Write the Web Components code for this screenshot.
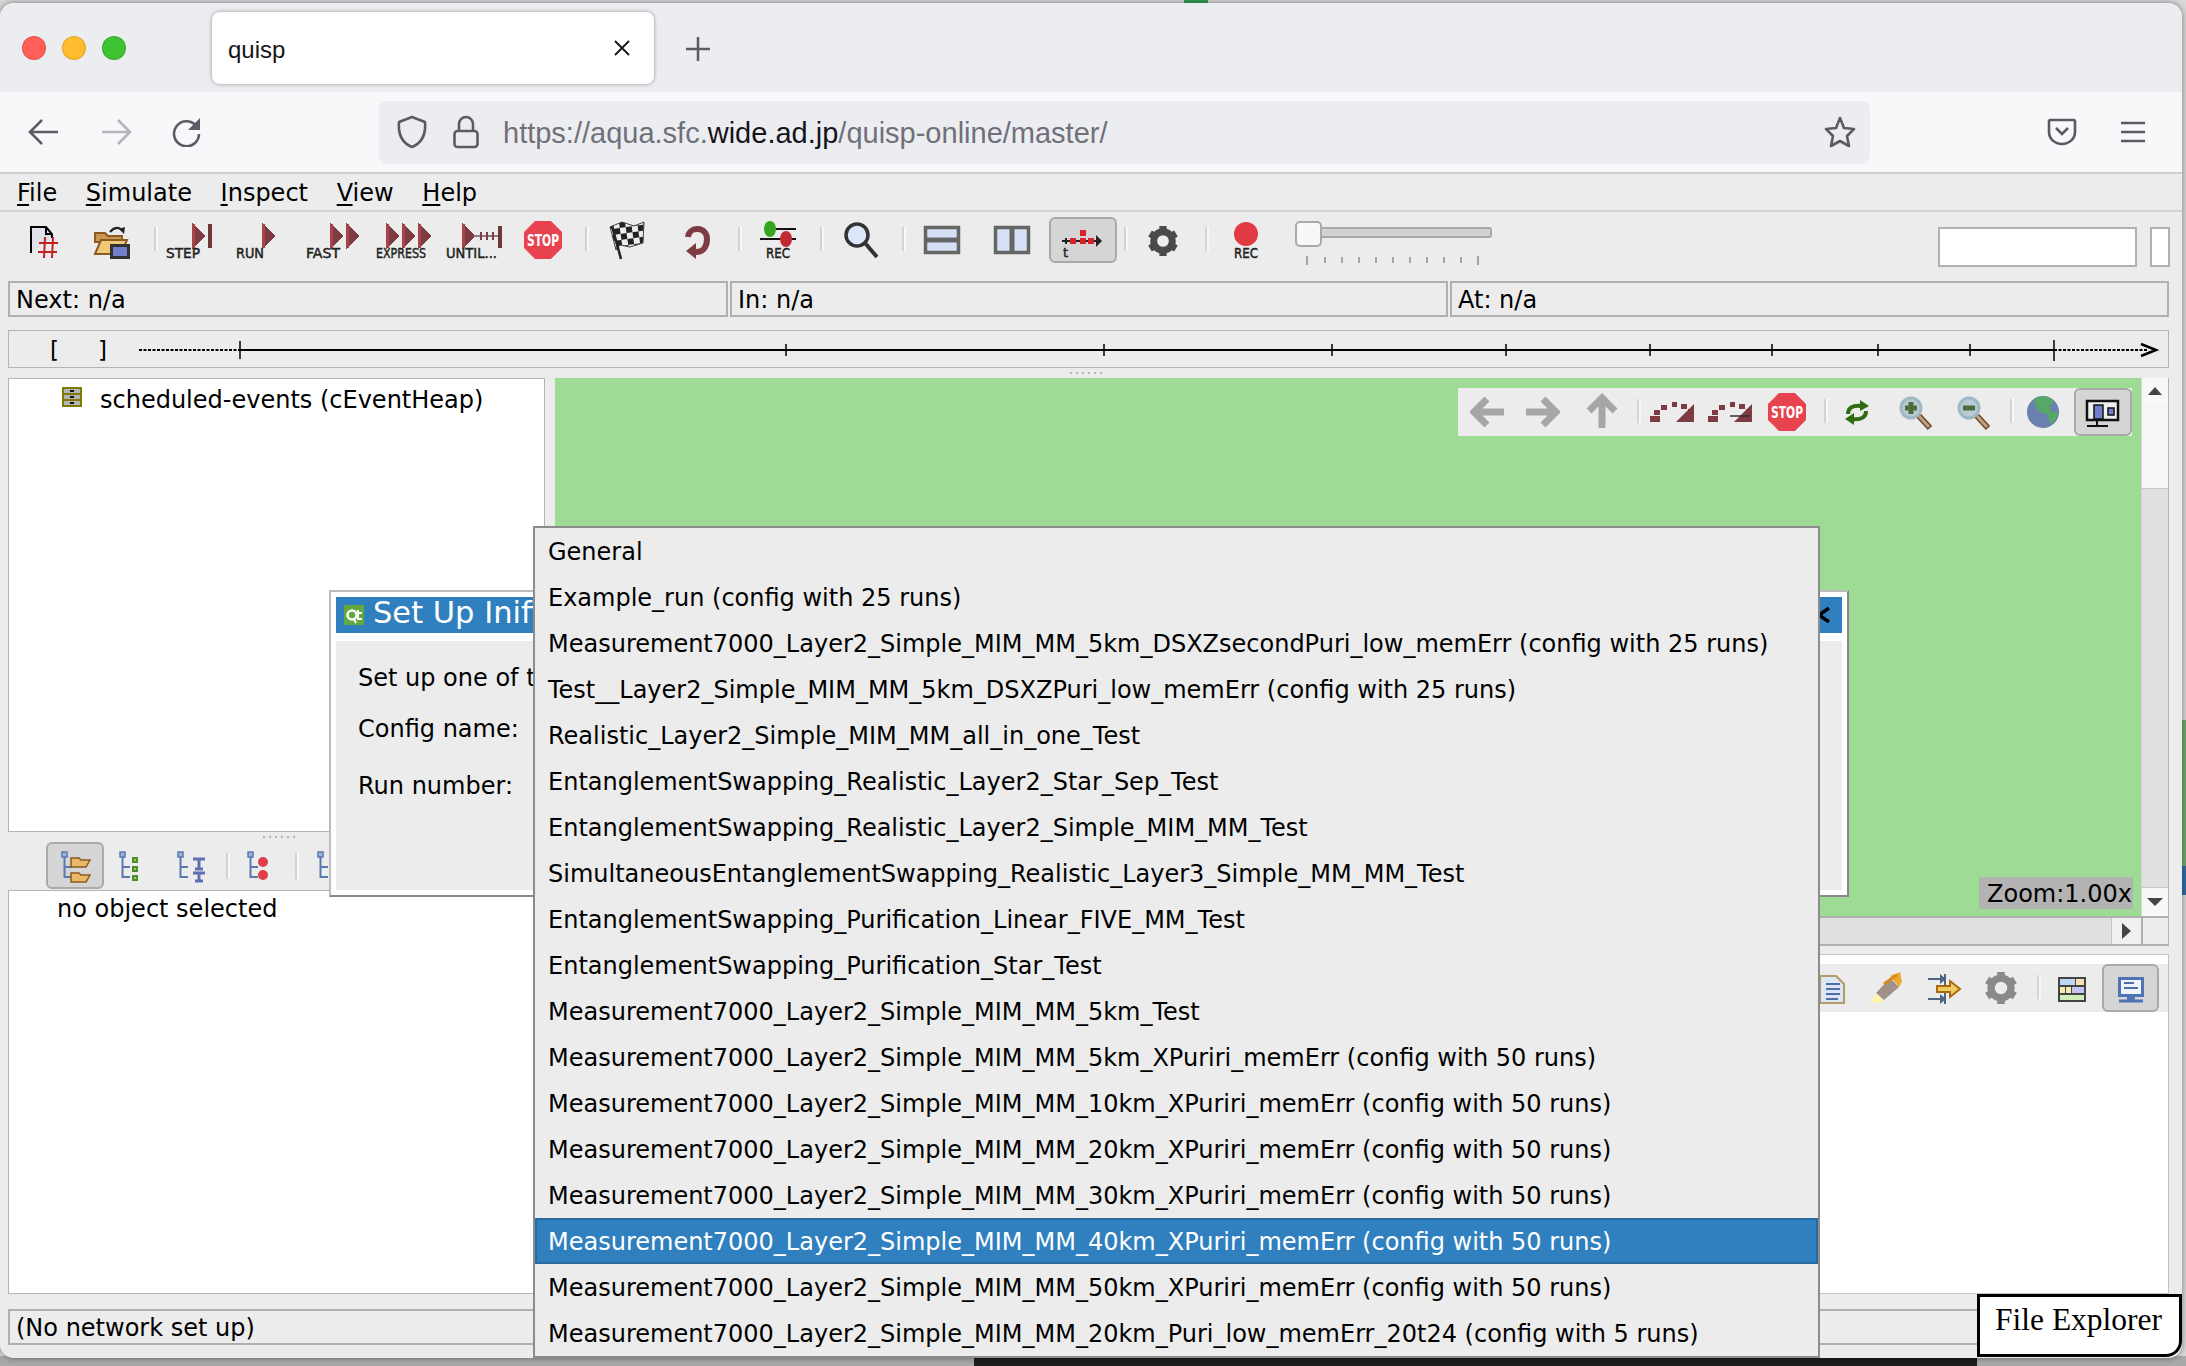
<!DOCTYPE html>
<html>
<head>
<meta charset="utf-8">
<title>quisp</title>
<style>
  html, body { margin: 0; padding: 0; width: 2186px; height: 1366px; overflow: hidden; }
  body {
    position: relative;
    background: linear-gradient(to bottom, #d8d8d8 0 720px, #6fa870 720px 866px, #2f6ea8 866px 895px, #d8d8d8 895px 1356px, #a9a9a9 1356px);
    font-family: "DejaVu Sans", sans-serif;
  }
</style>
</head>
<body>
<desk-behind></desk-behind>
<browser-window>
  <tab-strip></tab-strip>
  <nav-strip></nav-strip>
  <qt-app>
    <menu-bar></menu-bar>
    <tool-strip name="main"></tool-strip>
    <status-row>
      <qt-field style="width:720px">Next: n/a</qt-field>
      <qt-field style="width:718px">In: n/a</qt-field>
      <qt-field style="width:719px">At: n/a</qt-field>
    </status-row>
    <time-line></time-line>
    <split-dots style="height:10px;padding-left:1070px"></split-dots>
    <main-area>
      <left-col>
        <qt-pane style="height:454px">
          <tree-row>scheduled-events (cEventHeap)</tree-row>
        </qt-pane>
        <split-dots style="height:10px;padding-left:255px"></split-dots>
        <tool-strip name="objects"></tool-strip>
        <qt-pane style="flex:1"><pane-note>no object selected</pane-note></qt-pane>
      </left-col>
      <right-col>
        <net-canvas></net-canvas>
        <log-panel><tool-strip name="log"></tool-strip></log-panel>
      </right-col>
    </main-area>
    <status-row style="margin-top:15px">
      <qt-field style="width:2161px">(No network set up)</qt-field>
    </status-row>

    <setup-dialog></setup-dialog>
    <combo-popup>
      <popup-row>General</popup-row>
      <popup-row>Example_run (config with 25 runs)</popup-row>
      <popup-row>Measurement7000_Layer2_Simple_MIM_MM_5km_DSXZsecondPuri_low_memErr (config with 25 runs)</popup-row>
      <popup-row>Test__Layer2_Simple_MIM_MM_5km_DSXZPuri_low_memErr (config with 25 runs)</popup-row>
      <popup-row>Realistic_Layer2_Simple_MIM_MM_all_in_one_Test</popup-row>
      <popup-row>EntanglementSwapping_Realistic_Layer2_Star_Sep_Test</popup-row>
      <popup-row>EntanglementSwapping_Realistic_Layer2_Simple_MIM_MM_Test</popup-row>
      <popup-row>SimultaneousEntanglementSwapping_Realistic_Layer3_Simple_MM_MM_Test</popup-row>
      <popup-row>EntanglementSwapping_Purification_Linear_FIVE_MM_Test</popup-row>
      <popup-row>EntanglementSwapping_Purification_Star_Test</popup-row>
      <popup-row>Measurement7000_Layer2_Simple_MIM_MM_5km_Test</popup-row>
      <popup-row>Measurement7000_Layer2_Simple_MIM_MM_5km_XPuriri_memErr (config with 50 runs)</popup-row>
      <popup-row>Measurement7000_Layer2_Simple_MIM_MM_10km_XPuriri_memErr (config with 50 runs)</popup-row>
      <popup-row>Measurement7000_Layer2_Simple_MIM_MM_20km_XPuriri_memErr (config with 50 runs)</popup-row>
      <popup-row>Measurement7000_Layer2_Simple_MIM_MM_30km_XPuriri_memErr (config with 50 runs)</popup-row>
      <popup-row selected>Measurement7000_Layer2_Simple_MIM_MM_40km_XPuriri_memErr (config with 50 runs)</popup-row>
      <popup-row>Measurement7000_Layer2_Simple_MIM_MM_50km_XPuriri_memErr (config with 50 runs)</popup-row>
      <popup-row>Measurement7000_Layer2_Simple_MIM_MM_20km_Puri_low_memErr_20t24 (config with 5 runs)</popup-row>
    </combo-popup>
  </qt-app>
</browser-window>
<file-tag>File Explorer</file-tag>

<script>
// small helper: element with open shadow root and fixed markup
function simple(tag, html) {
  customElements.define(tag, class extends HTMLElement {
    constructor() {
      super();
      this.attachShadow({ mode: 'open' }).innerHTML = html;
    }
  });
}

// ---- icon helpers, all drawn in page coordinates ----
const MAROON = '#7e3c42';

function tri(x, y0, y1, w) {
  // crisp edges give the stairs of the upscaled original icons
  const mid = (y0 + y1) / 2;
  return `<polygon points="${x},${y0 - 1} ${x + w},${mid} ${x},${y1 + 1}" fill="${MAROON}" shape-rendering="crispEdges"/>
  <rect x="${x}" y="${y0}" width="3" height="${y1 - y0}" fill="#a6434c"/>`;
}
function lbl(x0, x1, t, y = 258) {
  return `<text x="${x0}" y="${y}" textLength="${x1 - x0}" lengthAdjust="spacingAndGlyphs" font-family="DejaVu Sans" font-size="13.5" fill="#222" stroke="#222" stroke-width=".45">${t}</text>`;
}
function sep(x, y0, y1) {
  return [x - 1, x + 3, `<rect x="${x - 1}" y="${y0}" width="2" height="${y1 - y0}" fill="#d3d3d3"/><rect x="${x + 1}" y="${y0}" width="2" height="${y1 - y0}" fill="#f8f8f8"/>`];
}
function stop(cx, cy) {
  const a = 19, b = 8;
  return `<polygon points="${cx - b},${cy - a} ${cx + b},${cy - a} ${cx + a},${cy - b} ${cx + a},${cy + b} ${cx + b},${cy + a} ${cx - b},${cy + a} ${cx - a},${cy + b} ${cx - a},${cy - b}" fill="#e7434f"/>
  <text x="${cx - 16}" y="${cy + 6}" textLength="32" lengthAdjust="spacingAndGlyphs" font-family="DejaVu Sans" font-weight="bold" font-size="15" fill="#fff">STOP</text>`;
}
function gear(cx, cy, r, c) {
  let s = `<circle cx="${cx}" cy="${cy}" r="${r * .62}" fill="none" stroke="${c}" stroke-width="${r * .46}"/>`;
  for (let i = 0; i < 6; i++) {
    s += `<rect x="${cx - r * .24}" y="${cy - r}" width="${r * .48}" height="${r * .5}" fill="${c}" transform="rotate(${i * 60} ${cx} ${cy})"/>`;
  }
  return s;
}
function selBtn(x0, x1, y0, y1) {
  return `<rect x="${x0 + 1}" y="${y0 + 1}" width="${x1 - x0 - 2}" height="${y1 - y0 - 2}" rx="5" fill="#d5d5d5" stroke="#a9a9a9" stroke-width="2"/>`;
}
function treeBase(x, y) {
  // small node with its branches
  const c = '#5a78b0';
  return `<rect x="${x}" y="${y}" width="5" height="5" fill="#9db3d8" stroke="${c}" stroke-width="1.5"/>
  <path d="M${x + 2.5} ${y + 5}V${y + 25}H${x + 10}M${x + 2.5} ${y + 15}H${x + 10}" fill="none" stroke="${c}" stroke-width="2"/>`;
}
function lens(cx, cy, sign) {
  const m = sign === '+' ? `<path d="M${cx - 6} ${cy}h12M${cx} ${cy - 6}v12" stroke="#4d6b3e" stroke-width="5"/>` : `<path d="M${cx - 6} ${cy}h12" stroke="#4d6b3e" stroke-width="5"/>`;
  return `<circle cx="${cx}" cy="${cy}" r="10" fill="#b8ccd4" stroke="#9fb8c4" stroke-width="3"/>${m}
  <path d="M${cx + 8} ${cy + 8}L${cx + 19} ${cy + 20}" stroke="#6b4a30" stroke-width="6"/>
  <path d="M${cx + 8} ${cy + 8}L${cx + 18} ${cy + 19}" stroke="#c0a080" stroke-width="3"/>`;
}
function curved(x, y) {
  return `<g fill="${MAROON}"><rect x="${x}" y="${y + 14}" width="10" height="6"/><rect x="${x + 4}" y="${y + 8}" width="6" height="5"/><rect x="${x + 11}" y="${y + 3}" width="6" height="5"/><rect x="${x + 22}" y="${y}" width="5" height="5"/><rect x="${x + 31}" y="${y + 2}" width="6" height="5"/><rect x="${x + 38}" y="${y + 7}" width="6" height="5"/><polygon points="${x + 44},${y + 2} ${x + 44},${y + 20} ${x + 26},${y + 20}"/></g>`;
}

const STRIPS = {
  main: { x0: 0, y0: 212, h: 69, items: [
    [28, 60, `<path d="M32 252H31V227H46L52 234V238M46 227V234H52" fill="#dfe2e8" stroke="#000" stroke-width="2"/>
      <path d="M45 237L44 258M53 237L52 258M39 243H58M38 252H57" stroke="#bf2020" stroke-width="2" fill="none"/>`],
    [92, 132, `<path d="M95 233h10l3 3h14v6H95z" fill="#c9974e" stroke="#8a5a20" stroke-width="2"/><path d="M95 254l6-14h26l-6 14z" fill="#f0c878" stroke="#8a5a20" stroke-width="2"/>
      <rect x="111.500" y="245.500" width="17" height="12" fill="#6f7fcc" stroke="#333" stroke-width="3"/>
      <path d="M110 232q6-7 12-2" fill="none" stroke="#222" stroke-width="2"/><path d="M119 229l6-2-1 7z" fill="#222"/>`],
    sep(155, 227, 251),
    [166, 213, tri(192, 224, 248, 14) + `<rect x="208" y="224" width="4" height="24" fill="#6f383c"/>` + lbl(166, 200, 'STEP')],
    [236, 277, tri(262, 224, 248, 14) + lbl(236, 264, 'RUN')],
    [306, 361, tri(330, 224, 248, 14) + tri(346, 224, 248, 14) + lbl(306, 340, 'FAST')],
    [376, 433, tri(386, 224, 248, 14) + tri(402, 224, 248, 14) + tri(418, 224, 248, 14) + lbl(376, 426, 'EXPRESS')],
    [446, 503, tri(462, 224, 248, 14) + `<rect x="474" y="235" width="26" height="2" fill="#8c7a7c"/><path d="M481 232v8M487 232v8M493 232v8" stroke="${MAROON}" stroke-width="2"/><rect x="498" y="226" width="4" height="22" fill="#6f383c"/>` + lbl(446, 497, 'UNTIL...')],
    [524, 563, stop(543, 240)],
    sep(586, 227, 251),
    [607, 646, `<defs><pattern id="chk" width="12" height="12" patternUnits="userSpaceOnUse" patternTransform="rotate(-8)"><rect width="12" height="12" fill="#eee"/><rect width="6" height="6" fill="#222"/><rect x="6" y="6" width="6" height="6" fill="#222"/></pattern></defs>
      <polygon points="610,227 622,222 634,226 644,222 643,243 630,247 620,245 616,250" fill="url(#chk)" stroke="#444" stroke-width="1"/>
      <path d="M612 226L621 259" stroke="#222" stroke-width="2.500"/>`],
    [682, 712, `<path d="M688 237C689 226 707 226 707 239C707 249 701 252 696 252" fill="none" stroke="${MAROON}" stroke-width="6"/><polygon points="696,243 696,259 686,251" fill="${MAROON}"/>`],
    sep(739, 227, 251),
    [758, 798, `<path d="M768 229H796M760 239H796" stroke="#111" stroke-width="2"/><ellipse cx="770" cy="229" rx="6" ry="8" fill="#35a51e"/><ellipse cx="786" cy="239" rx="6" ry="8" fill="#c02a30"/>` + lbl(766, 790, 'REC')],
    sep(821, 227, 251),
    [842, 880, `<circle cx="857" cy="235" r="11" fill="#dbe6f8" stroke="#333" stroke-width="3.5"/><path d="M865 243L877 257" stroke="#333" stroke-width="4"/>`],
    sep(903, 227, 251),
    [922, 962, `<rect x="925.500" y="227.500" width="33" height="25" fill="#d6e0f4" stroke="#666" stroke-width="3.500"/><path d="M925 240H959" stroke="#666" stroke-width="5"/>`],
    [992, 1032, `<rect x="995.500" y="227.500" width="33" height="25" fill="#d6e0f4" stroke="#666" stroke-width="3.500"/><path d="M1012 227V253" stroke="#666" stroke-width="5"/>`],
    [1049, 1117, selBtn(1049, 1117, 217, 263) + `<path d="M1062 241H1098" stroke="#222" stroke-width="2"/><polygon points="1096,235 1102,241 1096,247" fill="#222"/>
      <path d="M1066 238v6" stroke="#222" stroke-width="2"/><g fill="#d8232d"><rect x="1070" y="238" width="6" height="6"/><rect x="1080" y="238" width="6" height="6"/><rect x="1088" y="238" width="6" height="6"/><rect x="1080" y="230" width="6" height="6"/></g>
      <text x="1063" y="257" font-family="DejaVu Sans" font-size="13" fill="#222" stroke="#222" stroke-width=".4">t</text>`],
    sep(1125, 227, 251),
    [1146, 1180, gear(1163, 241, 15, '#4a4a4a')],
    sep(1206, 227, 251),
    [1232, 1260, `<circle cx="1246" cy="234" r="12" fill="#e13a42"/>` + lbl(1234, 1258, 'REC')],
    [1293, 1494, `<rect x="1310" y="228" width="181" height="9" rx="2" fill="#d2d2d2" stroke="#a9a9a9" stroke-width="2"/>
      <rect x="1296" y="222" width="25" height="24" rx="4" fill="#f8f8f8" stroke="#a9a9a9" stroke-width="2"/>
      <path d="M1307 256v9M1478 256v9M1325 257v6M1342 257v6M1359 257v6M1376 257v6M1393 257v6M1410 257v6M1427 257v6M1444 257v6M1461 257v6" stroke="#a5a5a5" stroke-width="2"/>`],
    { x0: 1938, x1: 2137, box: [227, 267] },
    { x0: 2150, x1: 2170, box: [227, 267] }
  ] },
  objects: { x0: 8, y0: 842, h: 48, items: [
    [46, 104, selBtn(46, 104, 842, 889) + treeBase(62, 852) + `<g fill="#eab868" stroke="#8a5a20" stroke-width="1.500"><path d="M71 858h8l2 2h9l-4 7H71z"/><path d="M71 873h8l2 2h9l-4 7H71z"/></g>`],
    [118, 140, treeBase(120, 852) + `<g fill="#9ccc60" stroke="#4d8c2a" stroke-width="2"><rect x="133" y="858" width="4" height="4"/><rect x="133" y="867" width="4" height="4"/><rect x="133" y="876" width="4" height="4"/></g>`],
    [176, 206, treeBase(178, 852) + `<g fill="none" stroke="#5f6fb4" stroke-width="3"><path d="M193 859h12M199 859v10M195 869h8M193 873h12M199 873v9M195 881h8"/></g>`],
    sep(227, 853, 879),
    [246, 270, treeBase(248, 852) + `<circle cx="263" cy="862" r="5" fill="#e23e49"/><circle cx="263" cy="875" r="5" fill="#e23e49"/>`],
    sep(296, 853, 879),
    [316, 329, treeBase(318, 852)]
  ] },
  canvas: { x0: 1458, y0: 388, h: 48, items: [
    [1470, 1506, `<path d="M1504 412H1476M1487 399L1474 412L1487 425" fill="none" stroke="#a6a6a6" stroke-width="7"/>`],
    [1524, 1560, `<path d="M1526 412H1554M1543 399L1556 412L1543 425" fill="none" stroke="#a6a6a6" stroke-width="7"/>`],
    [1584, 1620, `<path d="M1602 428V400M1589 411L1602 398L1615 411" fill="none" stroke="#a6a6a6" stroke-width="7"/>`],
    sep(1638, 399, 423),
    [1648, 1696, curved(1650, 402)],
    [1706, 1754, curved(1708, 402) + `<path d="M1730 416H1750" stroke="#3a2a2a" stroke-width="1.500"/>`],
    [1767, 1807, stop(1787, 412)],
    sep(1825, 399, 423),
    [1844, 1870, `<g fill="none" stroke="#2f6b10" stroke-width="4"><path d="M1848 414C1848 408 1852 405 1862 406"/><path d="M1866 411C1866 417 1862 420 1852 419"/></g><g fill="#2f6b10"><polygon points="1860,400 1869,406 1860,411"/><polygon points="1854,413 1845,419 1854,425"/></g>`],
    [1899, 1933, lens(1911, 408, '+')],
    [1957, 1991, lens(1969, 408, '-')],
    sep(2011, 399, 423),
    [2025, 2061, `<circle cx="2043" cy="412" r="16" fill="#6a80ae"/><path d="M2034 399q10-6 18 0q4 5-3 7l3 6l6 0q-1 8-7 12q-3-5-4-10q-9-1-11-8z" fill="#55a866"/>`],
    [2074, 2132, selBtn(2074, 2132, 388, 436) + `<rect x="2087" y="401" width="31" height="19" fill="#eee" stroke="#111" stroke-width="2.500"/><rect x="2094" y="405" width="9" height="14" fill="#6f7fcc" stroke="#111" stroke-width="1.500"/><rect x="2108" y="408" width="6" height="7" fill="#6f7fcc" stroke="#111" stroke-width="1.500"/><path d="M2097 420V426M2087 426H2108" stroke="#111" stroke-width="2"/>`]
  ] },
  log: { x0: 556, y0: 964, h: 48, items: [
    [1818, 1846, `<path d="M1820 976H1836L1844 984V1003H1820Z" fill="#dce7f6" stroke="#b59a66" stroke-width="2"/><path d="M1826 984H1840M1826 989H1840M1826 994H1840M1826 999H1838" stroke="#4f6ea8" stroke-width="2"/>`],
    [1868, 1904, `<path d="M1890 978L1899 987L1884 1000L1876 993Z" fill="#a09088"/><path d="M1890 976L1900 972L1902 982L1899 987Z" fill="#f0a830"/><path d="M1876 993L1885 1002L1870 1003Z" fill="#fff4b0"/><path d="M1884 984L1897 975" stroke="#d88a20" stroke-width="3"/>`],
    [1926, 1962, `<path d="M1928 979H1942M1928 999H1942M1945 974V986M1945 993V1004" stroke="#4f6480" stroke-width="2"/><polygon points="1940,974 1946,979 1940,984" fill="#4f6480"/><polygon points="1940,994 1946,999 1940,1004" fill="#4f6480"/>
      <path d="M1937 986H1950V981L1960 989L1950 997V992H1937Z" fill="#f0cc60" stroke="#a86a10" stroke-width="2"/>`],
    [1984, 2018, gear(2001, 988, 16, '#8a8a8a')],
    sep(2038, 975, 999),
    [2056, 2088, `<rect x="2058" y="977" width="28" height="25" fill="#444"/><rect x="2060" y="979" width="15" height="6" fill="#bcd6f4"/><rect x="2076" y="979" width="8" height="6" fill="#fbe0b0"/><rect x="2060" y="987" width="5" height="6" fill="#f4ecb0"/><rect x="2066" y="987" width="5" height="6" fill="#f4ecb0"/><rect x="2072" y="987" width="12" height="6" fill="#c4c4f4"/><rect x="2060" y="995" width="24" height="5" fill="#cfeeb8"/>`],
    [2102, 2159, selBtn(2102, 2159, 964, 1012) + `<rect x="2119.500" y="978.500" width="23" height="17" fill="#eef3fa" stroke="#4f74b4" stroke-width="3"/><path d="M2124 983H2134M2124 988H2138" stroke="#4f6ea8" stroke-width="2"/><path d="M2127 998H2135M2119 1001H2143" stroke="#4f74b4" stroke-width="3"/>`]
  ] }
};

class ToolStrip extends HTMLElement {
  constructor() {
    super();
    this.attachShadow({ mode: 'open' });
  }
  connectedCallback() {
    const s = STRIPS[this.getAttribute('name')];
    let prev = s.x0, out = '';
    for (const it of s.items) {
      const box = !Array.isArray(it);
      const x0 = box ? it.x0 : it[0], x1 = box ? it.x1 : it[1];
      const left = x0 - prev;
      if (box) {
        out += `<div class="box" style="margin-left:${left}px;margin-top:${it.box[0] - s.y0}px;width:${x1 - x0}px;height:${it.box[1] - it.box[0]}px"></div>`;
      } else {
        out += `<svg style="margin-left:${left}px" width="${x1 - x0}" height="${s.h}" viewBox="${x0} ${s.y0} ${x1 - x0} ${s.h}">${it[2]}</svg>`;
      }
      prev = x1;
    }
    this.shadowRoot.innerHTML = `<style>
      :host { display: flex; height: ${s.h}px; align-items: flex-start; flex: none; }
      svg { display: block; flex: none; }
      .box { flex: none; box-sizing: border-box; background: #fff; border: 2px solid #b0b0b0; }
    </style>${out}`;
  }
}
customElements.define('tool-strip', ToolStrip);

simple('desk-behind', `<style>
  :host { display: block; position: absolute; inset: 0; }
  .dark { position: absolute; left: 974px; width: 1003px; top: 1358px; height: 8px; background: #1e1e1e; }
  .tip { position: absolute; left: 1184px; top: 0; width: 24px; height: 3px; background: #35a05a; }
</style><div class="dark"></div><div class="tip"></div>`);

simple('browser-window', `<style>
  :host {
    display: flex; flex-direction: column; position: relative;
    width: 2182px; height: 1355px; margin-top: 3px;
    border-radius: 14px 14px 14px 14px; overflow: hidden;
    box-shadow: 0 0 6px rgba(0,0,0,.45);
  }
</style><slot></slot>`);

simple('tab-strip', `<style>
  :host { display: flex; align-items: flex-start; height: 89px; flex: none; background: #ecedf1; }
  .lights { display: flex; gap: 16px; padding: 33px 0 0 22px; flex: none; width: 190px; }
  .lights i { display: block; width: 24px; height: 24px; border-radius: 50%; box-sizing: border-box; border: 1px solid rgba(0,0,0,.12); }
  .tab {
    margin: 9px 0 0 0; width: 442px; height: 72px; box-sizing: border-box; flex: none;
    background: #fff; border-radius: 8px; box-shadow: 0 0 4px rgba(0,0,0,.35);
    display: flex; align-items: center; padding: 0 24px 0 16px;
    font: 24px "Liberation Sans", sans-serif; color: #15141a;
  }
  .tab span { flex: 1; padding-top: 4px; }
  .plus { margin: 33px 0 0 31px; flex: none; }
</style>
<div class="lights"><i style="background:#ff5f57"></i><i style="background:#febc2e"></i><i style="background:#3fc332"></i></div>
<div class="tab"><span>quisp</span>
  <svg width="16" height="16" viewBox="0 0 16 16"><path d="M1 1L15 15M15 1L1 15" stroke="#15141a" stroke-width="1.800"/></svg></div>
<svg class="plus" width="26" height="26" viewBox="0 0 26 26"><path d="M13 1V25M1 13H25" stroke="#5b5b66" stroke-width="2.500"/></svg>`);

simple('nav-strip', `<style>
  :host { display: flex; align-items: center; height: 82px; flex: none; box-sizing: border-box; background: #f8f8fa; border-bottom: 2px solid #cfcfcf; }
  svg { display: block; flex: none; }
  .url {
    margin-left: 177px; width: 1491px; height: 63px; flex: none; box-sizing: border-box;
    background: #ecedf1; border-radius: 8px; display: flex; align-items: center; padding: 0 14px 0 18px;
  }
  .txt { margin-left: 24px; padding-top: 2px; font: 29px "Liberation Sans", sans-serif; color: #70707a; flex: 1; white-space: nowrap; }
  .txt b { font-weight: normal; color: #15141a; }
</style>
<svg style="margin-left:28px" width="32" height="28" viewBox="0 0 32 28"><path d="M2 14H30M14 2L2 14L14 26" fill="none" stroke="#5b5b66" stroke-width="2.600"/></svg>
<svg style="margin-left:40px" width="32" height="28" viewBox="0 0 32 28"><path d="M2 14H30M18 2L30 14L18 26" fill="none" stroke="#b4b4bb" stroke-width="2.600"/></svg>
<svg style="margin-left:40px" width="30" height="30" viewBox="0 0 30 30"><path d="M25 10A12.500 12.500 0 1 0 27 17" fill="none" stroke="#5b5b66" stroke-width="2.600"/><polygon points="28,1 28,13 16,13" fill="#5b5b66"/></svg>
<div class="url">
  <svg width="30" height="34" viewBox="0 0 30 34"><path d="M15 2L28 7C29 19 25 28 15 32C5 28 1 19 2 7Z" fill="none" stroke="#5b5b66" stroke-width="2.600" stroke-linejoin="round"/></svg>
  <svg style="margin-left:26px" width="26" height="34" viewBox="0 0 26 34"><path d="M6 16V9A7 7 0 0 1 20 9V16" fill="none" stroke="#5b5b66" stroke-width="2.600"/><rect x="1.500" y="16" width="23" height="16" rx="3" fill="none" stroke="#5b5b66" stroke-width="2.600"/></svg>
  <div class="txt">https://aqua.sfc.<b>wide.ad.jp</b>/quisp-online/master/</div>
  <svg width="32" height="32" viewBox="0 0 32 32"><path d="M16 2L20 12L30 13L23 20L25 30L16 25L7 30L9 20L2 13L12 12Z" fill="none" stroke="#5b5b66" stroke-width="2.600" stroke-linejoin="round"/></svg>
</div>
<svg style="margin-left:177px" width="30" height="28" viewBox="0 0 30 28"><path d="M3 2H27A1.500 1.500 0 0 1 28 4V14C28 21 22 26 15 26C8 26 2 21 2 14V4A1.500 1.500 0 0 1 3 2Z" fill="none" stroke="#5b5b66" stroke-width="2.600"/><path d="M9 10L15 16L21 10" fill="none" stroke="#5b5b66" stroke-width="2.600"/></svg>
<svg style="margin-left:43px" width="26" height="22" viewBox="0 0 26 22"><path d="M1 2H25M1 11H25M1 20H25" stroke="#5b5b66" stroke-width="2.600"/></svg>`);

simple('qt-app', `<style>
  :host { display: flex; flex-direction: column; flex: 1; position: relative; background: #ececec; color: #000;
    font: 24px "DejaVu Sans", sans-serif; min-height: 0; }
</style><slot></slot>`);

class MenuBar extends HTMLElement {
  constructor() {
    super();
    const names = ['File', 'Simulate', 'Inspect', 'View', 'Help'];
    const items = names.map(n => `<span>${n}</span>`).join('');
    this.attachShadow({ mode: 'open' }).innerHTML = `<style>
      :host { display: flex; gap: 28.700px; height: 38px; box-sizing: border-box; padding: 2px 0 0 17px; align-items: center; flex: none; border-bottom: 2px solid #d2d2d2; }
      span { display: inline-block; }
      span::first-letter { text-decoration: underline; text-underline-offset: 3px; }
    </style>${items}`;
  }
}
customElements.define('menu-bar', MenuBar);

simple('status-row', `<style>
  :host { display: flex; gap: 2px; margin-left: 8px; height: 36px; flex: none; }
</style><slot></slot>`);

simple('qt-field', `<style>
  :host { display: flex; align-items: center; box-sizing: border-box; flex: none; height: 36px; border: 2px solid #b0b0b0; padding: 1px 0 0 6px; white-space: nowrap; }
</style><slot></slot>`);

class TimeLine extends HTMLElement {
  constructor() {
    super();
    const ticks = [786, 1104, 1332, 1506, 1650, 1772, 1878, 1970].map(x => `M${x} 344V356`).join('');
    this.attachShadow({ mode: 'open' }).innerHTML = `<style>
      :host { display: block; margin: 13px 0 0 8px; width: 2161px; height: 38px; box-sizing: border-box; border: 1px solid #b4b4b4; flex: none; }
      svg { display: block; }
    </style>
    <svg width="2159" height="36" viewBox="9 331 2159 36">
      <text x="50" y="358" font-family="DejaVu Sans" font-size="23">[</text>
      <text x="98" y="358" font-family="DejaVu Sans" font-size="23">]</text>
      <path d="M139 350H240M2054 350H2148" stroke="#000" stroke-width="2" stroke-dasharray="3 1.500"/>
      <path d="M240 350H2054" stroke="#000" stroke-width="2"/>
      <path d="M240 341V359M2054 340V361${ticks}" stroke="#000" stroke-width="1.500"/>
      <path d="M2141 344L2156 350L2141 356" fill="none" stroke="#000" stroke-width="2.500"/>
    </svg>`;
  }
}
customElements.define('time-line', TimeLine);

simple('split-dots', `<style>
  :host { display: flex; align-items: center; flex: none; box-sizing: border-box; }
  i { display: block; width: 32px; height: 2px; background: repeating-linear-gradient(to right, #b4b4b4 0 2px, transparent 2px 6px); }
</style><i></i>`);

simple('main-area', `<style>
  :host { display: flex; height: 916px; flex: none; margin-left: 8px; }
</style><slot></slot>`);

simple('left-col', `<style>
  :host { display: flex; flex-direction: column; width: 537px; flex: none; margin-right: 10px; }
</style><slot></slot>`);

simple('right-col', `<style>
  :host { display: flex; flex-direction: column; width: 1614px; flex: none; }
</style><slot></slot>`);

simple('qt-pane', `<style>
  :host { display: block; box-sizing: border-box; background: #fff; border: 1px solid #b4b4b4; flex: none; }
</style><slot></slot>`);

simple('tree-row', `<style>
  :host { display: flex; align-items: center; height: 27px; padding: 7px 0 0 53px; white-space: nowrap; }
  svg { display: block; margin-right: 18px; flex: none; position: relative; top: -3px; }
</style>
<svg width="20" height="20" viewBox="0 0 20 20"><rect x="1" y="1" width="18" height="18" fill="#b4b4b4" stroke="#7c7c00" stroke-width="2"/><path d="M1 7H19M1 13H19" stroke="#7c7c00" stroke-width="2"/><path d="M8 4H12M8 10H12M8 16H12" stroke="#111" stroke-width="2"/></svg>
<slot></slot>`);

simple('pane-note', `<style>
  :host { display: block; padding: 3px 0 0 48px; line-height: 30px; }
</style><slot></slot>`);

class NetCanvas extends HTMLElement {
  constructor() {
    super();
    this.attachShadow({ mode: 'open' }).innerHTML = `<style>
      :host { display: grid; grid-template-columns: 1586px 27px; grid-template-rows: 538px 28px; height: 566px; flex: none; position: relative;
        border-bottom: 2px solid #b0b0b0; border-right: 1px solid #b4b4b4; box-sizing: content-box; }
      .green { background: #9edc95; position: relative; }
      tool-strip { position: absolute; left: 903px; top: 10px; width: 674px; background: #ececec; }
      .zoom { position: absolute; left: 1424px; top: 499px; width: 154px; height: 32px; box-sizing: border-box; padding: 1px 0 0 8px; background: #b3b3b3; display: flex; align-items: center; white-space: nowrap; }
      .v { display: flex; flex-direction: column; background: #e0e0e0; border-left: 1px solid #d4d4d4; }
      .v .btn { height: 26px; background: #f8f8f8; display: flex; align-items: center; justify-content: center; flex: none; }
      .v .thumb { height: 84px; background: #f6f6f6; border-bottom: 1px solid #c8c8c8; flex: none; }
      .v .track { flex: 1; }
      .h { background: #e0e0e0; display: flex; justify-content: flex-end; border-top: 2px solid #b0b0b0; }
      .h .btn { width: 29px; background: #f0f0f0; border-left: 1px solid #c4c4c4; display: flex; align-items: center; justify-content: center; }
      .corner { background: #ececec; border-top: 2px solid #b0b0b0; border-left: 2px solid #b0b0b0; }
      svg { display: block; }
    </style>
    <div class="green">
      <tool-strip name="canvas"></tool-strip>
      <div class="zoom">Zoom:1.00x</div>
    </div>
    <div class="v">
      <div class="btn"><svg width="14" height="8"><polygon points="7,0 14,8 0,8" fill="#444"/></svg></div>
      <div class="thumb"></div><div class="track"></div>
      <div class="btn" style="height:28px;border-top:1px solid #c8c8c8"><svg width="16" height="8"><polygon points="0,0 16,0 8,8" fill="#444"/></svg></div>
    </div>
    <div class="h"><div class="btn"><svg width="9" height="16"><polygon points="0,0 9,8 0,16" fill="#444"/></svg></div></div>
    <div class="corner"></div>`;
  }
}
customElements.define('net-canvas', NetCanvas);

simple('log-panel', `<style>
  :host { display: block; margin-top: 8px; width: 1614px; height: 340px; box-sizing: border-box; background: #fff; border: 1px solid #c4c4c4; padding-top: 9px; flex: none; }
  div { background: #ececec; }
</style><div><slot></slot></div>`);

class SetupDialog extends HTMLElement {
  constructor() {
    super();
    this.attachShadow({ mode: 'open' }).innerHTML = `<style>
      :host { position: absolute; left: 329px; top: 416px; width: 1520px; height: 307px; box-sizing: border-box; background: #fff;
        border: 2px solid #888; border-top-color: #bcbcbc; border-left-color: #bcbcbc; padding: 5px 5px 5px 5px; display: flex; flex-direction: column; }
      .title { height: 36px; background: #3080c0; color: #fff; display: flex; align-items: center; flex: none; font-size: 30.500px; line-height: 34px; white-space: nowrap; position: relative; }
      .title svg.qt { margin: 0 9px 0 8px; flex: none; }
      .title svg.x { position: absolute; right: 12px; top: 10px; }
      .body { flex: 1; margin-top: 8px; background: #ececec; padding-left: 22px; }
      .body div { position: relative; line-height: 30px; white-space: nowrap; }
    </style>
    <div class="title">
      <svg class="qt" width="20" height="20" viewBox="0 0 20 20"><rect width="20" height="20" fill="#62a83c"/><circle cx="8" cy="10" r="4.500" fill="none" stroke="#fff" stroke-width="2.500"/><path d="M10 14L12 18M14 5V14H18M12 8H18" fill="none" stroke="#fff" stroke-width="2"/></svg>
      <span style="position:relative;top:-2px">Set Up Inifile</span>
      <svg class="x" width="22" height="16" viewBox="0 0 22 16"><path d="M1 1L21 15M21 1L1 15" stroke="#000" stroke-width="3.500"/></svg>
    </div>
    <div class="body">
      <div style="margin-top:22px">Set up one of the</div>
      <div style="margin-top:21px">Config name:</div>
      <div style="margin-top:27px">Run number:</div>
    </div>`;
  }
}
customElements.define('setup-dialog', SetupDialog);

simple('combo-popup', `<style>
  :host { position: absolute; left: 533px; top: 352px; width: 1287px; height: 832px; box-sizing: border-box; background: #ececec; border: 2px solid #8c8c8c; display: block; overflow: hidden; }
</style><slot></slot>`);

simple('popup-row', `<style>
  :host { display: block; height: 46px; box-sizing: border-box; line-height: 49px; padding-left: 13px; white-space: nowrap; }
  :host([selected]) { background: #3080c0; color: #fff; outline: 2px solid #2a6a9e; outline-offset: -2px; }
</style><slot></slot>`);

simple('file-tag', `<style>
  :host { position: absolute; left: 1977px; top: 1294px; width: 205px; height: 63px; box-sizing: border-box; background: #fff;
    border: 3px solid #000; border-bottom-right-radius: 16px; display: block; padding: 5px 0 0 15px;
    font: 31.500px "Liberation Serif", serif; color: #000; white-space: nowrap; }
</style><slot></slot>`);
</script>
</body>
</html>
